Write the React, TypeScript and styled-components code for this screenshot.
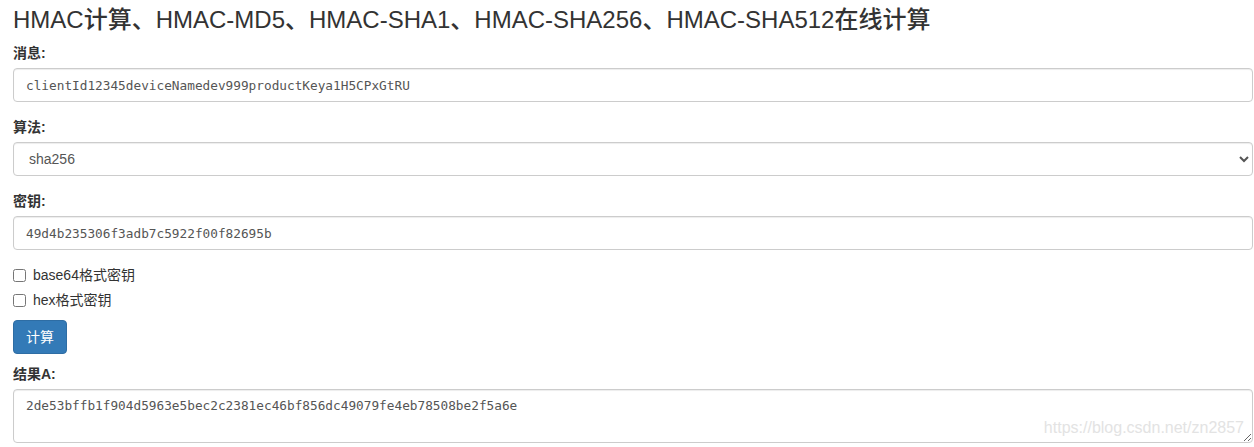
import React from "react";
import styled, { createGlobalStyle } from "styled-components";

const Global = createGlobalStyle`
  html, body { margin: 0; padding: 0; background: #fff; }
  body {
    font-family: "Liberation Sans", Arial, "Noto Sans CJK SC", sans-serif;
    font-size: 14px;
    line-height: 20px;
    color: #333;
  }
  * { box-sizing: border-box; }
`;

const Page = styled.div`
  position: relative;
  padding: 7px 1px 0 13px;
`;

const Title = styled.h3`
  margin: 0 0 10px;
  font-size: 24px;
  font-weight: 500;
  line-height: 26.4px;
  color: #333;
`;

const Group = styled.div`
  margin-bottom: 15px;
`;

const Label = styled.label`
  display: block;
  margin-bottom: 5px;
  font-weight: 700;
  font-size: 14px;
  line-height: 20px;
`;

const fieldBase = `
  display: block;
  width: 100%;
  padding: 6px 12px;
  font-size: 14px;
  line-height: 20px;
  color: #555;
  background: #fff;
  border: 1px solid #ccc;
  border-radius: 4px;
  box-shadow: inset 0 1px 1px rgba(0, 0, 0, 0.075);
  outline: none;
`;

const Input = styled.input`
  ${fieldBase}
  height: 34px;
  font-family: "DejaVu Sans Mono", monospace;
  font-size: 12.75px;
`;

const Select = styled.select`
  ${fieldBase}
  height: 34px;
  font-family: "Liberation Sans", Arial, sans-serif;
  padding: 6px 11px;
`;

const TextArea = styled.textarea`
  ${fieldBase}
  height: 54px;
  resize: vertical;
  font-family: "DejaVu Sans Mono", monospace;
  font-size: 12.75px;
`;

const CheckRow = styled.div<{ $first?: boolean }>`
  margin-top: ${(p) => (p.$first ? "10px" : "-5px")};
  margin-bottom: 10px;
  min-height: 20px;
`;

const CheckLabel = styled.label`
  display: block;
  position: relative;
  padding-left: 20px;
  font-weight: 400;
  line-height: 20px;
  color: #333;
`;

const Check = styled.input`
  position: absolute;
  left: 0;
  top: 0;
  margin: 4px 0 0;
  width: 13px;
  height: 13px;
`;

const Button = styled.button`
  display: inline-block;
  padding: 6px 12px;
  margin: 0 0 10px;
  font-family: "Liberation Sans", Arial, "Noto Sans CJK SC", sans-serif;
  font-size: 14px;
  line-height: 20px;
  color: #fff;
  background: #337ab7;
  border: 1px solid #2e6da4;
  border-radius: 4px;
  cursor: pointer;
`;

const ResultWrap = styled.div`
  position: relative;
`;

const Watermark = styled.span`
  position: absolute;
  right: 9px;
  bottom: 6px;
  font-family: "Liberation Sans", Arial, sans-serif;
  font-size: 16px;
  line-height: 18px;
  color: #e3e3e3;
  pointer-events: none;
`;

export default function App() {
  return (
    <>
      <Global />
      <Page>
        <Title>HMAC计算、HMAC-MD5、HMAC-SHA1、HMAC-SHA256、HMAC-SHA512在线计算</Title>
        <Group>
          <Label>消息:</Label>
          <Input defaultValue="clientId12345deviceNamedev999productKeya1H5CPxGtRU" />
        </Group>
        <Group>
          <Label>算法:</Label>
          <Select defaultValue="sha256">
            <option value="md5">md5</option>
            <option value="sha1">sha1</option>
            <option value="sha256">sha256</option>
            <option value="sha512">sha512</option>
          </Select>
        </Group>
        <Group>
          <Label>密钥:</Label>
          <Input defaultValue="49d4b235306f3adb7c5922f00f82695b" />
        </Group>
        <CheckRow $first>
          <CheckLabel>
            <Check type="checkbox" />
            base64格式密钥
          </CheckLabel>
        </CheckRow>
        <CheckRow>
          <CheckLabel>
            <Check type="checkbox" />
            hex格式密钥
          </CheckLabel>
        </CheckRow>
        <Button>计算</Button>
        <Label>结果A:</Label>
        <ResultWrap>
          <TextArea
            rows={2}
            defaultValue="2de53bffb1f904d5963e5bec2c2381ec46bf856dc49079fe4eb78508be2f5a6e"
          />
          <Watermark>https://blog.csdn.net/zn2857</Watermark>
        </ResultWrap>
      </Page>
    </>
  );
}
